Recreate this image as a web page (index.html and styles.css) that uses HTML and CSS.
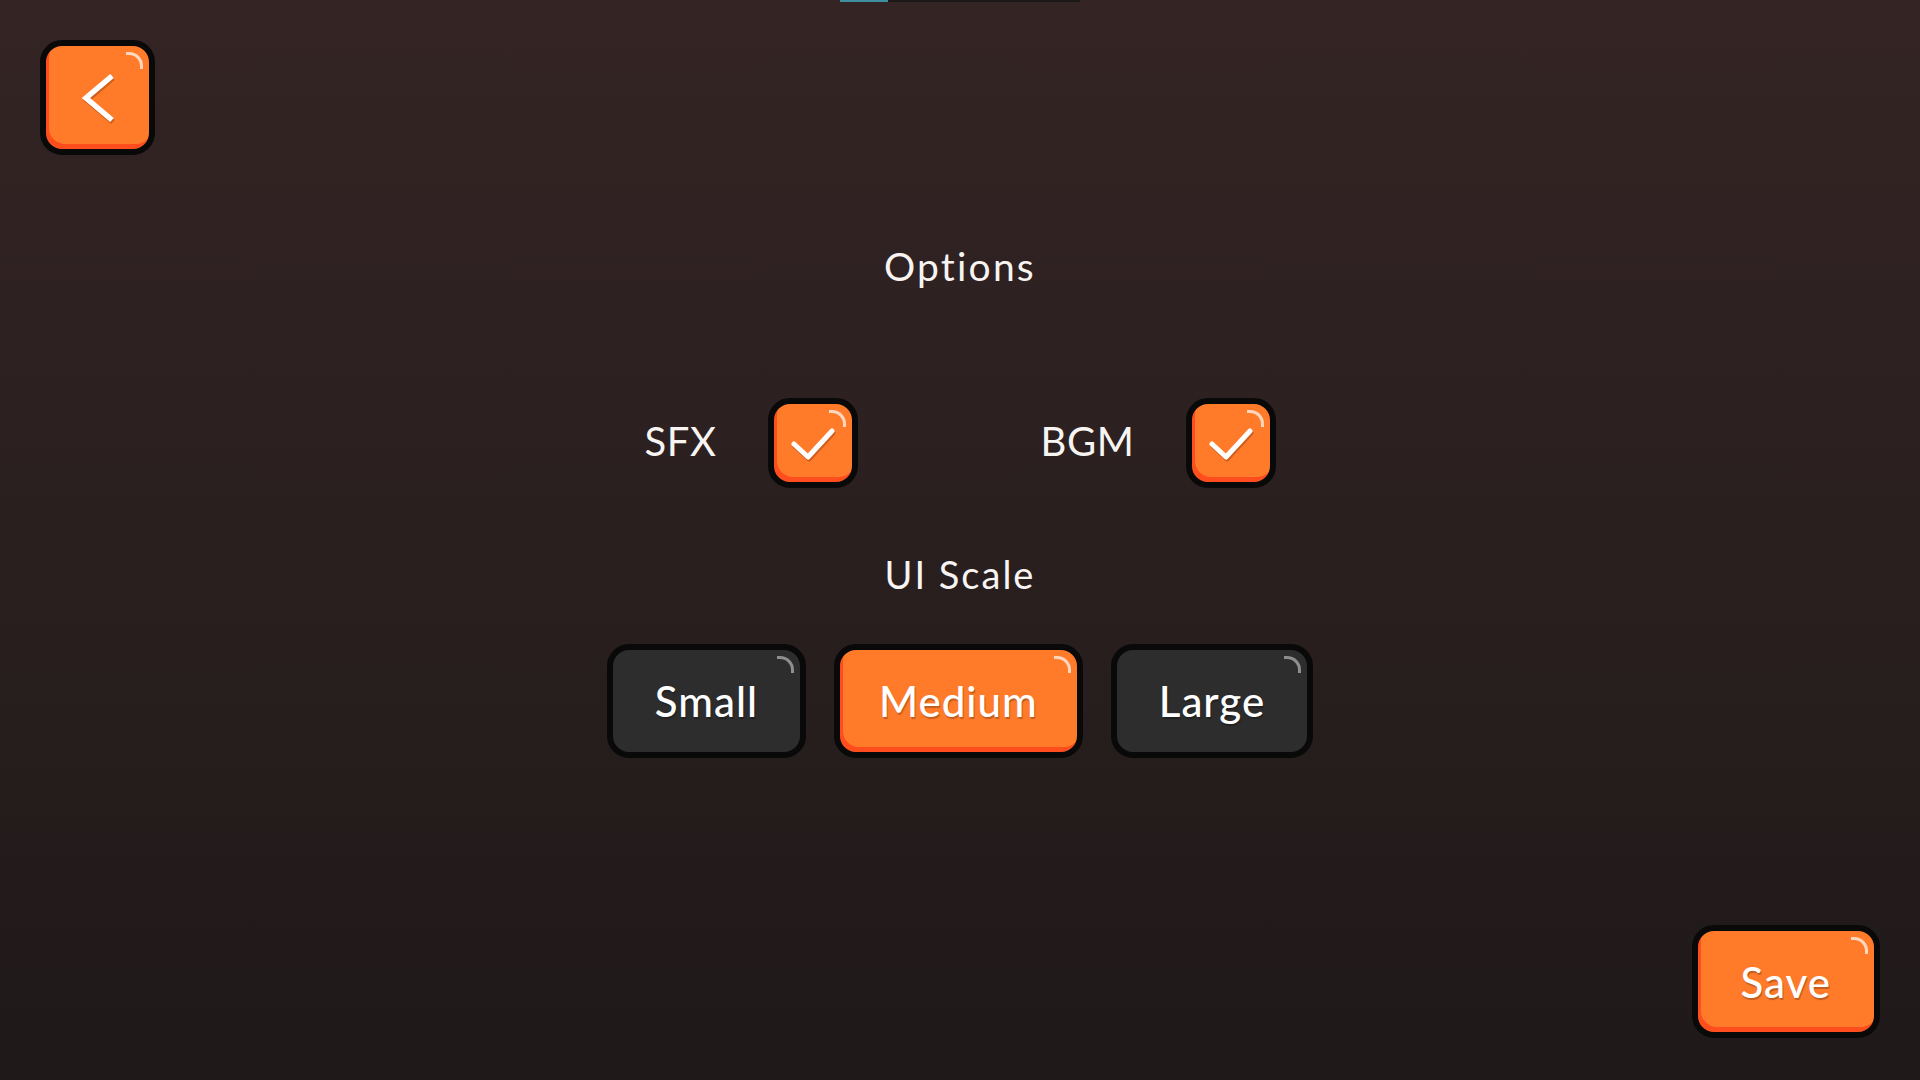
FILE: index.html
```html
<!DOCTYPE html>
<html lang="en">
<head>
<meta charset="utf-8">
<title>Options</title>
<link rel="stylesheet" href="styles.css">
</head>
<body>
<div class="app">
  <div class="progress"><div class="progress-fill"></div></div>
  <header class="header">
    <button class="btn btn-orange btn-back" aria-label="Back">
      <svg class="chev" width="34" height="50" viewBox="0 0 34 50"><polyline points="30,3 4,25 30,47" fill="none" stroke="#fff" stroke-width="5.5" stroke-linejoin="miter" stroke-linecap="butt"/></svg>
    </button>
  </header>
  <main class="content">
    <h1 class="title">Options</h1>
    <div class="toggles">
      <div class="toggle">
        <span class="toggle-label">SFX</span>
        <div class="btn btn-orange checkbox">
          <svg class="check" width="44" height="34" viewBox="0 0 44 34"><polyline points="3,17 17,30 41,4" fill="none" stroke="#fff" stroke-width="5" stroke-linecap="round" stroke-linejoin="round"/></svg>
        </div>
      </div>
      <div class="toggle">
        <span class="toggle-label">BGM</span>
        <div class="btn btn-orange checkbox">
          <svg class="check" width="44" height="34" viewBox="0 0 44 34"><polyline points="3,17 17,30 41,4" fill="none" stroke="#fff" stroke-width="5" stroke-linecap="round" stroke-linejoin="round"/></svg>
        </div>
      </div>
    </div>
    <h2 class="subtitle">UI Scale</h2>
    <div class="scale-row">
      <button class="btn btn-dark btn-text btn-small">Small</button>
      <button class="btn btn-orange btn-text btn-medium">Medium</button>
      <button class="btn btn-dark btn-text btn-large">Large</button>
    </div>
  </main>
  <footer class="footer">
    <button class="btn btn-orange btn-text btn-save">Save</button>
  </footer>
</div>
</body>
</html>
```

FILE: styles.css
```css
* { box-sizing: border-box; }

html, body {
  margin: 0;
  height: 100%;
}

body {
  background: linear-gradient(180deg, #342424 0%, #2a1f1f 50%, #1f1919 100%);
  color: #f7f4f2;
  font-family: "Lato", "Open Sans", sans-serif;
  overflow: hidden;
}

.app {
  height: 1080px;
  display: flex;
  flex-direction: column;
  padding: 0 40px 42px 40px;
}

.progress {
  align-self: center;
  width: 240px;
  height: 2px;
  background: #1d1818;
  display: flex;
}

.progress-fill {
  width: 48px;
  height: 2px;
  background: #3f8fa3;
}

.header {
  margin-top: 38px;
  display: flex;
}

.btn {
  position: relative;
  border: 6px solid #0a0909;
  border-radius: 22px;
  padding: 0;
  margin: 0;
  display: flex;
  align-items: center;
  justify-content: center;
  font-family: inherit;
  color: #fff;
  cursor: pointer;
}

.btn::after {
  content: "";
  position: absolute;
  top: 6px;
  right: 6px;
  width: 14px;
  height: 14px;
  border-top: 3px solid rgba(255, 255, 255, 0.7);
  border-right: 3px solid rgba(255, 255, 255, 0.7);
  border-radius: 0 14px 0 0;
}

.btn-orange {
  background: #ff7b2a;
  box-shadow: inset 3px -5px 0 #ff4d1d;
}

.btn-dark {
  background: #2d2d2d;
}

.btn-dark::after {
  border-color: #8e8e8e;
}

.btn-back {
  width: 115px;
  height: 115px;
}

.chev {
  margin-left: 2px;
  filter: drop-shadow(1px 2px 0 rgba(120, 40, 0, 0.35));
}

.content {
  display: flex;
  flex-direction: column;
  align-items: center;
}

.title {
  margin: 87px 0 0 0;
  font-size: 39px;
  line-height: 48px;
  font-weight: 400;
  letter-spacing: 2.2px;
}

.toggles {
  margin-top: 108px;
  display: flex;
  gap: 183px;
}

.toggle {
  display: flex;
  align-items: center;
  gap: 51px;
}

.toggle-label {
  font-size: 40px;
  line-height: 48px;
  letter-spacing: 0.6px;
  margin-top: -4px;
}

.checkbox {
  width: 90px;
  height: 90px;
  border-radius: 22px;
}

.check {
  margin-top: 2px;
  filter: drop-shadow(1px 2px 0 rgba(120, 40, 0, 0.35));
}

.subtitle {
  margin: 64px 0 0 0;
  font-size: 38px;
  line-height: 44px;
  font-weight: 400;
  letter-spacing: 2px;
}

.scale-row {
  margin-top: 48px;
  display: flex;
  gap: 28px;
}

.btn-text {
  height: 114px;
  padding: 0 41px;
  font-size: 42px;
  font-weight: 500;
  letter-spacing: 1px;
  text-shadow: 1px 2px 1px rgba(0, 0, 0, 0.25);
}

.btn-small {
  padding: 0 42px;
}

.btn-medium {
  padding: 0 39px;
}

.btn-large {
  padding: 0 42px;
}

.footer {
  margin-top: auto;
  display: flex;
  justify-content: flex-end;
}

.btn-save {
  height: 113px;
  padding: 0 43px;
}
```
